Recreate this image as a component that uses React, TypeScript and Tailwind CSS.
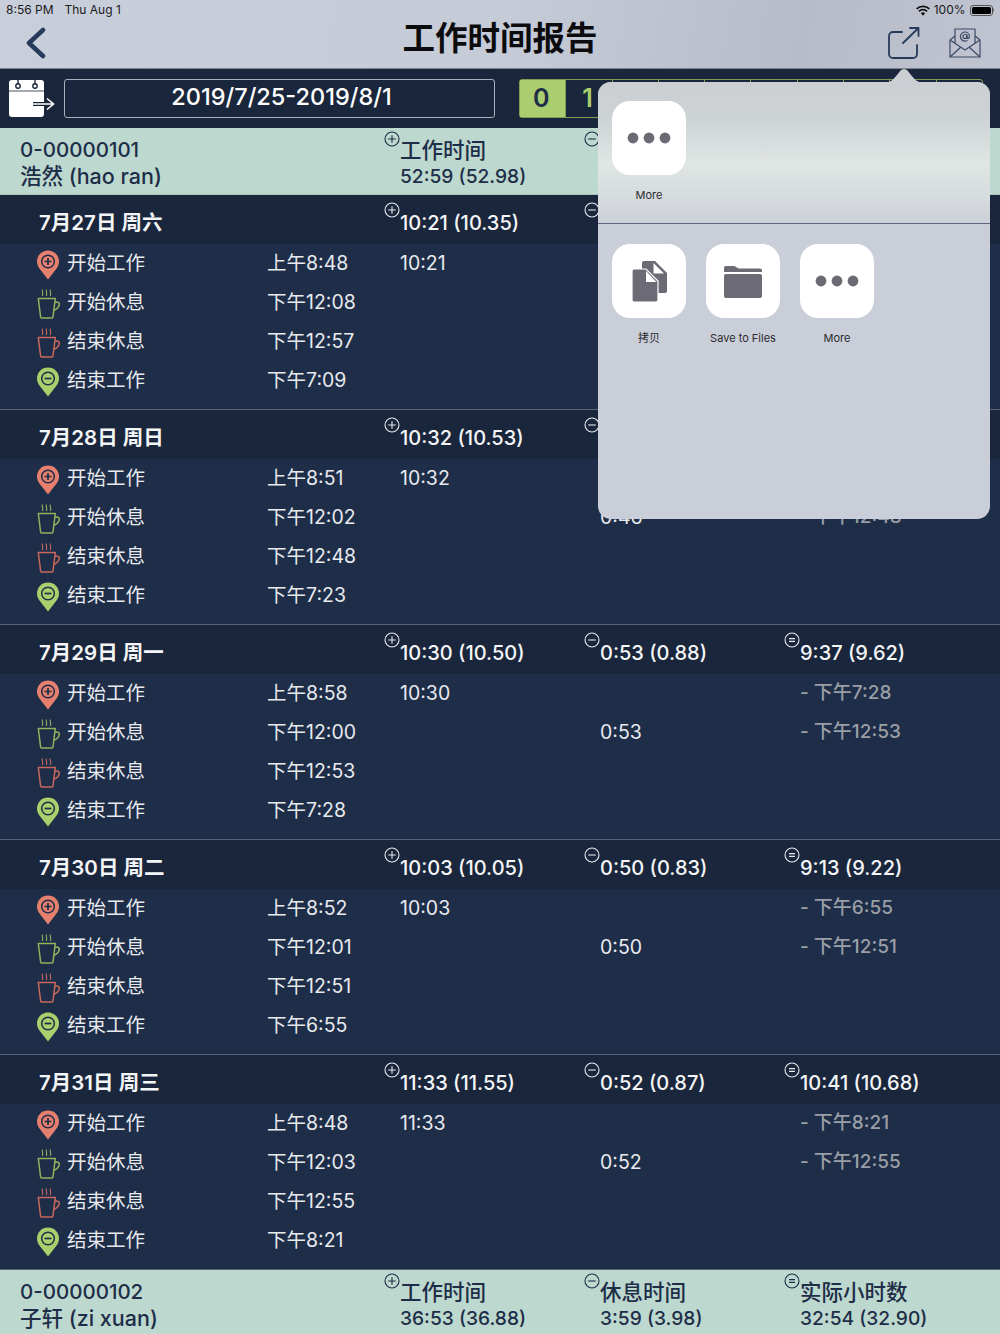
import React from "react";

const FONT = "font-['Inter','Noto_Sans_CJK_SC',sans-serif]";

type Day = {
  date: string;
  work: string;
  rest: string;
  net: string;
  times: string[];
  workCell: string;
  restCell: string;
  ends: string[];
};

const days: Day[] = [
  {
    date: "7月27日 周六",
    work: "10:21 (10.35)",
    rest: "0:49 (0.82)",
    net: "9:32 (9.53)",
    times: ["上午8:48", "下午12:08", "下午12:57", "下午7:09"],
    workCell: "10:21",
    restCell: "0:49",
    ends: ["- 下午7:09", "- 下午12:57"],
  },
  {
    date: "7月28日 周日",
    work: "10:32 (10.53)",
    rest: "0:46 (0.77)",
    net: "9:46 (9.77)",
    times: ["上午8:51", "下午12:02", "下午12:48", "下午7:23"],
    workCell: "10:32",
    restCell: "0:46",
    ends: ["- 下午7:23", "- 下午12:48"],
  },
  {
    date: "7月29日 周一",
    work: "10:30 (10.50)",
    rest: "0:53 (0.88)",
    net: "9:37 (9.62)",
    times: ["上午8:58", "下午12:00", "下午12:53", "下午7:28"],
    workCell: "10:30",
    restCell: "0:53",
    ends: ["- 下午7:28", "- 下午12:53"],
  },
  {
    date: "7月30日 周二",
    work: "10:03 (10.05)",
    rest: "0:50 (0.83)",
    net: "9:13 (9.22)",
    times: ["上午8:52", "下午12:01", "下午12:51", "下午6:55"],
    workCell: "10:03",
    restCell: "0:50",
    ends: ["- 下午6:55", "- 下午12:51"],
  },
  {
    date: "7月31日 周三",
    work: "11:33 (11.55)",
    rest: "0:52 (0.87)",
    net: "10:41 (10.68)",
    times: ["上午8:48", "下午12:03", "下午12:55", "下午8:21"],
    workCell: "11:33",
    restCell: "0:52",
    ends: ["- 下午8:21", "- 下午12:55"],
  },
];

const labels = ["开始工作", "开始休息", "结束休息", "结束工作"];

function Sign({ kind, light }: { kind: "plus" | "minus" | "equal"; light?: boolean }) {
  const c = light ? "#e6e9ee" : "#1e2d48";
  return (
    <svg width="16" height="16" viewBox="0 0 16 16" fill="none" stroke={c} strokeWidth="1.1" className="absolute left-[-16px] top-[-6px]">
      <circle cx="8" cy="8" r="7" />
      {kind === "plus" && <path d="M4.2 8h7.600M8 4.200v7.600" />}
      {kind === "minus" && <path d="M4.200 8h7.600" />}
      {kind === "equal" && <path d="M5 6.600h6M5 9.400h6" />}
    </svg>
  );
}

function Pin({ color, minus }: { color: string; minus?: boolean }) {
  return (
    <svg width="24" height="30" viewBox="0 0 24 30">
      <path d="M12 .5C5.800.5 1 5.400 1 11.400c0 3 1.100 5.100 2.800 7.700L12 29.500l8.200-10.400c1.700-2.600 2.800-4.700 2.800-7.700C23 5.400 18.200.5 12 .5z" fill={color} />
      <circle cx="12" cy="11.500" r="6.300" fill="none" stroke="#1e2d48" strokeWidth="1.500" />
      <path d={minus ? "M8.600 11.500h6.800" : "M8.600 11.500h6.800M12 8.100v6.800"} stroke="#1e2d48" strokeWidth="1.700" fill="none" />
    </svg>
  );
}

function Cup({ color }: { color: string }) {
  return (
    <svg width="24" height="30" viewBox="0 0 24 30" fill="none" stroke={color} strokeWidth="1.500" strokeLinejoin="round">
      <path d="M2.300 9.500h17l-2.300 18.300c-.1.800-.6 1.300-1.400 1.300H6c-.8 0-1.300-.5-1.400-1.300z" />
      <path d="M19 13.500c1.800-.8 4.300-.6 4.300 1.500 0 2.700-3 5.200-5.300 6.300" />
      <path strokeWidth="1.100" d="M6.500.5c-1.300 1.500 1.300 3-.2 6.500M10.500.5c-1.300 1.500 1.300 3-.2 6.500M14.500.5c-1.300 1.500 1.300 3-.2 6.500" />
    </svg>
  );
}

function RowIcon({ index }: { index: number }) {
  if (index === 0) return <Pin color="#e5806e" />;
  if (index === 1) return <Cup color="#8fb35f" />;
  if (index === 2) return <Cup color="#c9685c" />;
  return <Pin color="#a9d06c" minus />;
}

function DaySection({ day }: { day: Day }) {
  return (
    <section className="h-[215px] bg-[#1e2d48] border-b border-[#56627a]">
      <div className="flex h-[49px] items-center bg-[#1a263b] pt-[7px] text-[20px] font-medium text-[#f4f5f7]">
        <div className="w-[400px] pl-[39px] text-[20.500px] font-semibold">{day.date}</div>
        <div className="relative w-[200px]">
          <Sign kind="plus" light />
          {day.work}
        </div>
        <div className="relative w-[200px]">
          <Sign kind="minus" light />
          {day.rest}
        </div>
        <div className="relative w-[200px]">
          <Sign kind="equal" light />
          {day.net}
        </div>
      </div>
      {labels.map((label, i) => (
        <div key={label} className="flex h-[39px] items-center text-[19.500px] text-[#e8eaee]">
          <div className="flex w-[36px] shrink-0 justify-end">
            <div className="-mr-[24px] w-[24px] translate-y-[1px]">
              <RowIcon index={i} />
            </div>
          </div>
          <div className="w-[231px] shrink-0 pl-[31px]">{label}</div>
          <div className="w-[133px] shrink-0">{day.times[i]}</div>
          <div className="w-[200px] shrink-0">{i === 0 ? day.workCell : ""}</div>
          <div className="w-[200px] shrink-0">{i === 1 ? day.restCell : ""}</div>
          <div className="w-[200px] shrink-0 text-[19px] font-medium text-[#9a9ea6]">{i < 2 ? day.ends[i] : ""}</div>
        </div>
      ))}
    </section>
  );
}

function EmployeeRow({ id, name, work, rest, net, rowClass }: { id: string; name: string; work: string; rest: string; net: string; rowClass: string }) {
  const cols: { kind: "plus" | "minus" | "equal"; title: string; value: string }[] = [
    { kind: "plus", title: "工作时间", value: work },
    { kind: "minus", title: "休息时间", value: rest },
    { kind: "equal", title: "实际小时数", value: net },
  ];
  return (
    <div className={`flex bg-[#bdd9cf] text-[21px] font-medium leading-[26px] text-[#1e2d48] ${rowClass}`}>
      <div className="w-[400px] pl-[20px] pt-[9px]">
        <div className="text-[20.500px]">{id}</div>
        <div className="text-[21.500px]">{name}</div>
      </div>
      {cols.map((c) => (
        <div key={c.kind} className="relative w-[200px] pt-[9px]">
          <div className="relative">
            <Sign kind={c.kind} />
          </div>
          <div className="text-[21.500px]">{c.title}</div>
          <div className="text-[19.200px]">{c.value}</div>
        </div>
      ))}
    </div>
  );
}

function ShareTile({ label, children }: { label: string; children: React.ReactNode }) {
  return (
    <div className="flex w-[74px] flex-col items-center">
      <div className="flex h-[74px] w-[74px] items-center justify-center rounded-[18px] bg-white">{children}</div>
      <div className="mt-[13px] whitespace-nowrap text-[11px] leading-[14px] text-[#2a2a2e]">{label}</div>
    </div>
  );
}

function Dots() {
  return (
    <svg width="44" height="12" viewBox="0 0 44 12" fill="#6c6b75">
      <circle cx="6" cy="6" r="5.400" />
      <circle cx="22" cy="6" r="5.400" />
      <circle cx="38" cy="6" r="5.400" />
    </svg>
  );
}

function SharePopover() {
  return (
    <div className="absolute left-[598px] top-[82px] h-[437px] w-[392px] rounded-[13px] bg-[#c9ced8]">
      <svg width="44" height="14" viewBox="0 0 44 14" className="absolute left-[284px] top-[-13px]" fill="#cbcfd3">
        <path d="M0 14c8 0 11-3 15-8 3-4 4-6 7-6s4 2 7 6c4 5 7 8 15 8z" />
      </svg>
      <div className="h-[142px] rounded-t-[13px] border-b border-[#5d667c] bg-[linear-gradient(180deg,#cbcfd3_0%,#cdd2d5_25%,#e0e6e4_58%,#d6dbde_82%,#ccd0d7_100%)] pl-[14px] pt-[19px]">
        <ShareTile label="More">
          <Dots />
        </ShareTile>
      </div>
      <div className="flex gap-[20px] pl-[14px] pt-[20px]">
        <ShareTile label="拷贝">
          <svg width="35" height="41" viewBox="0 0 35 41">
            <path d="M12 0h11l12 12v18a2 2 0 0 1-2 2H12a2 2 0 0 1-2-2V2a2 2 0 0 1 2-2z" fill="#6c6b75" />
            <path d="M21.500 2l10.500 10.500h-10.500z" fill="#fff" />
            <path d="M2 8h12l12 12v19a2 2 0 0 1-2 2H2a2 2 0 0 1-2-2V10a2 2 0 0 1 2-2z" fill="#6c6b75" stroke="#fff" strokeWidth="1.200" />
            <path d="M14 10l10.500 11H14z" fill="#fff" />
          </svg>
        </ShareTile>
        <ShareTile label="Save to Files">
          <svg width="38" height="33" viewBox="0 0 38 33" fill="#6c6b75">
            <path d="M0 7V3a2 2 0 0 1 2-2h8c2 0 3 2.500 5 2.500h21a2 2 0 0 1 2 2V7z" />
            <path d="M2 9h34a2 2 0 0 1 2 2v20a2 2 0 0 1-2 2H2a2 2 0 0 1-2-2V11a2 2 0 0 1 2-2z" />
          </svg>
        </ShareTile>
        <ShareTile label="More">
          <Dots />
        </ShareTile>
      </div>
    </div>
  );
}

export default function App() {
  return (
    <div className={`relative h-[1334px] w-[1000px] overflow-hidden bg-[#1e2d48] ${FONT}`}>
      {/* Nav bar */}
      <header className="relative h-[69px] border-b border-[#7d8597] bg-[linear-gradient(100deg,#c9cedb_0%,#c6cbd8_50%,#b7bcc9_80%,#c0c4d0_100%)]">
        <div className="flex h-[20px] items-center justify-between pl-[6px] pr-[6px] text-[12px] text-[#1a1a1a]">
          <div className="flex gap-[11px]">
            <span>8:56 PM</span>
            <span>Thu Aug 1</span>
          </div>
          <div className="flex items-center gap-[4px]">
            <svg width="14" height="11" viewBox="0 0 15 11" fill="#111">
              <path d="M7.500 11L5.200 8.500a3.300 3.300 0 0 1 4.600 0zM3.800 7.100L2.500 5.700a7.200 7.200 0 0 1 10 0l-1.300 1.400a5.300 5.300 0 0 0-7.400 0zM1.300 4.500L0 3.100a10.900 10.900 0 0 1 15 0l-1.300 1.400a9 9 0 0 0-12.400 0z" />
            </svg>
            <span>100%</span>
            <div className="flex items-center">
              <div className="h-[11px] w-[23px] rounded-[3px] border border-[#555] p-[1px]">
                <div className="h-full w-full rounded-[1.500px] bg-black" />
              </div>
              <div className="h-[4px] w-[1.500px] rounded-r-[1px] bg-[#777]" />
            </div>
          </div>
        </div>
        <div className="relative flex h-[48px] items-start justify-between pl-[26px] pr-[19px] pt-[8px]">
          <svg width="20" height="32" viewBox="0 0 20 32" fill="none" stroke="#263a5a" strokeWidth="4.500" strokeLinecap="round" strokeLinejoin="round" className="mt-[-1px]">
            <path d="M17 3L3 16l14 13" />
          </svg>
          <h1 className="absolute left-0 right-0 top-[-5px] text-center text-[32.500px] font-bold leading-[48px] text-[#0c0c0e]">工作时间报告</h1>
          <div className="flex items-start gap-[29px]">
            <svg width="32" height="32" viewBox="0 0 32 32" fill="none" stroke="#263a5a" strokeWidth="1.800" strokeLinecap="round" strokeLinejoin="round" className="mt-[-1px] ml-[-1px]">
              <path d="M14 5H5a4 4 0 0 0-4 4v18a4 4 0 0 0 4 4h20a4 4 0 0 0 4-4V18" />
              <path d="M15 16L30.500 1M22 1h8.500v8" />
            </svg>
            <svg width="32" height="30" viewBox="0 0 32 30" fill="none" stroke="#3b4a66" strokeWidth="1.200" strokeLinejoin="round">
              <path d="M1 12v17h30V12l-5-4M6 8l-5 4" />
              <path d="M6 15V1h20v14" />
              <path d="M1 12l15 10 15-10M1 29l11-10M31 29L20 19" />
              <circle cx="16" cy="8.500" r="2" />
              <path d="M18 6.500v3c0 1.500 2.400 1.500 2.400-.8 0-2.800-2-4.700-4.400-4.700s-4.600 2-4.600 4.500 2 4.700 4.600 4.700c1 0 1.800-.2 2.400-.6" />
            </svg>
          </div>
        </div>
      </header>

      {/* Date toolbar */}
      <div className="flex h-[59px] items-center bg-[#1a263b] pl-[9px]">
        <svg width="47" height="38" viewBox="0 0 47 38" className="shrink-0">
          <path d="M3 0h29a3 3 0 0 1 3 3v31a3 3 0 0 1-3 3H3a3 3 0 0 1-3-3V3a3 3 0 0 1 3-3z" fill="#fff" />
          <path d="M0 11h35" stroke="#1a263b" strokeWidth=".8" />
          <path d="M9 0v4M26 0v4" stroke="#1a263b" strokeWidth="1.400" />
          <circle cx="9" cy="6" r="2.200" fill="none" stroke="#1a263b" strokeWidth="1.400" />
          <circle cx="26" cy="6" r="2.200" fill="none" stroke="#1a263b" strokeWidth="1.400" />
          <path d="M24 24h20M38 18.500l6.500 5.500-6.500 5.500" fill="none" stroke="#1a263b" strokeWidth="4" />
          <path d="M24 24h20M38 18.500l6.500 5.500-6.500 5.500" fill="none" stroke="#fff" strokeWidth="1.600" />
        </svg>
        <div className="ml-[8px] flex h-[39px] w-[431px] items-center justify-center rounded-[3px] border border-[#aab0bb] pb-[3px] pl-[4px] text-[23.500px] font-medium text-white">2019/7/25-2019/8/1</div>
        <div className="ml-[24px] flex h-[39px] w-[464px] rounded-[3px] border border-[#7f9f55] text-[25px] font-semibold">
          {["0", "1", "2", "3", "4", "5", "6", "7", "8", "9"].map((n, i) => (
            <div
              key={n}
              className={i === 0 ? "flex flex-1 items-center justify-center bg-[#a9cd6f] pr-[3px] text-[#1e2d48]" : "flex flex-1 items-center justify-center border-l border-[#7f9f55] pr-[3px] text-[#a9cd6f]"}
            >
              {n}
            </div>
          ))}
        </div>
      </div>

      <EmployeeRow id="0-00000101" name="浩然 (hao ran)" work="52:59 (52.98)" rest="4:10 (4.18)" net="48:49 (48.80)" rowClass="h-[67px] border-b border-[#a9c5bb]" />

      {days.map((day) => (
        <DaySection key={day.date} day={day} />
      ))}

      <EmployeeRow id="0-00000102" name="子轩 (zi xuan)" work="36:53 (36.88)" rest="3:59 (3.98)" net="32:54 (32.90)" rowClass="h-[64px]" />

      <SharePopover />
    </div>
  );
}
